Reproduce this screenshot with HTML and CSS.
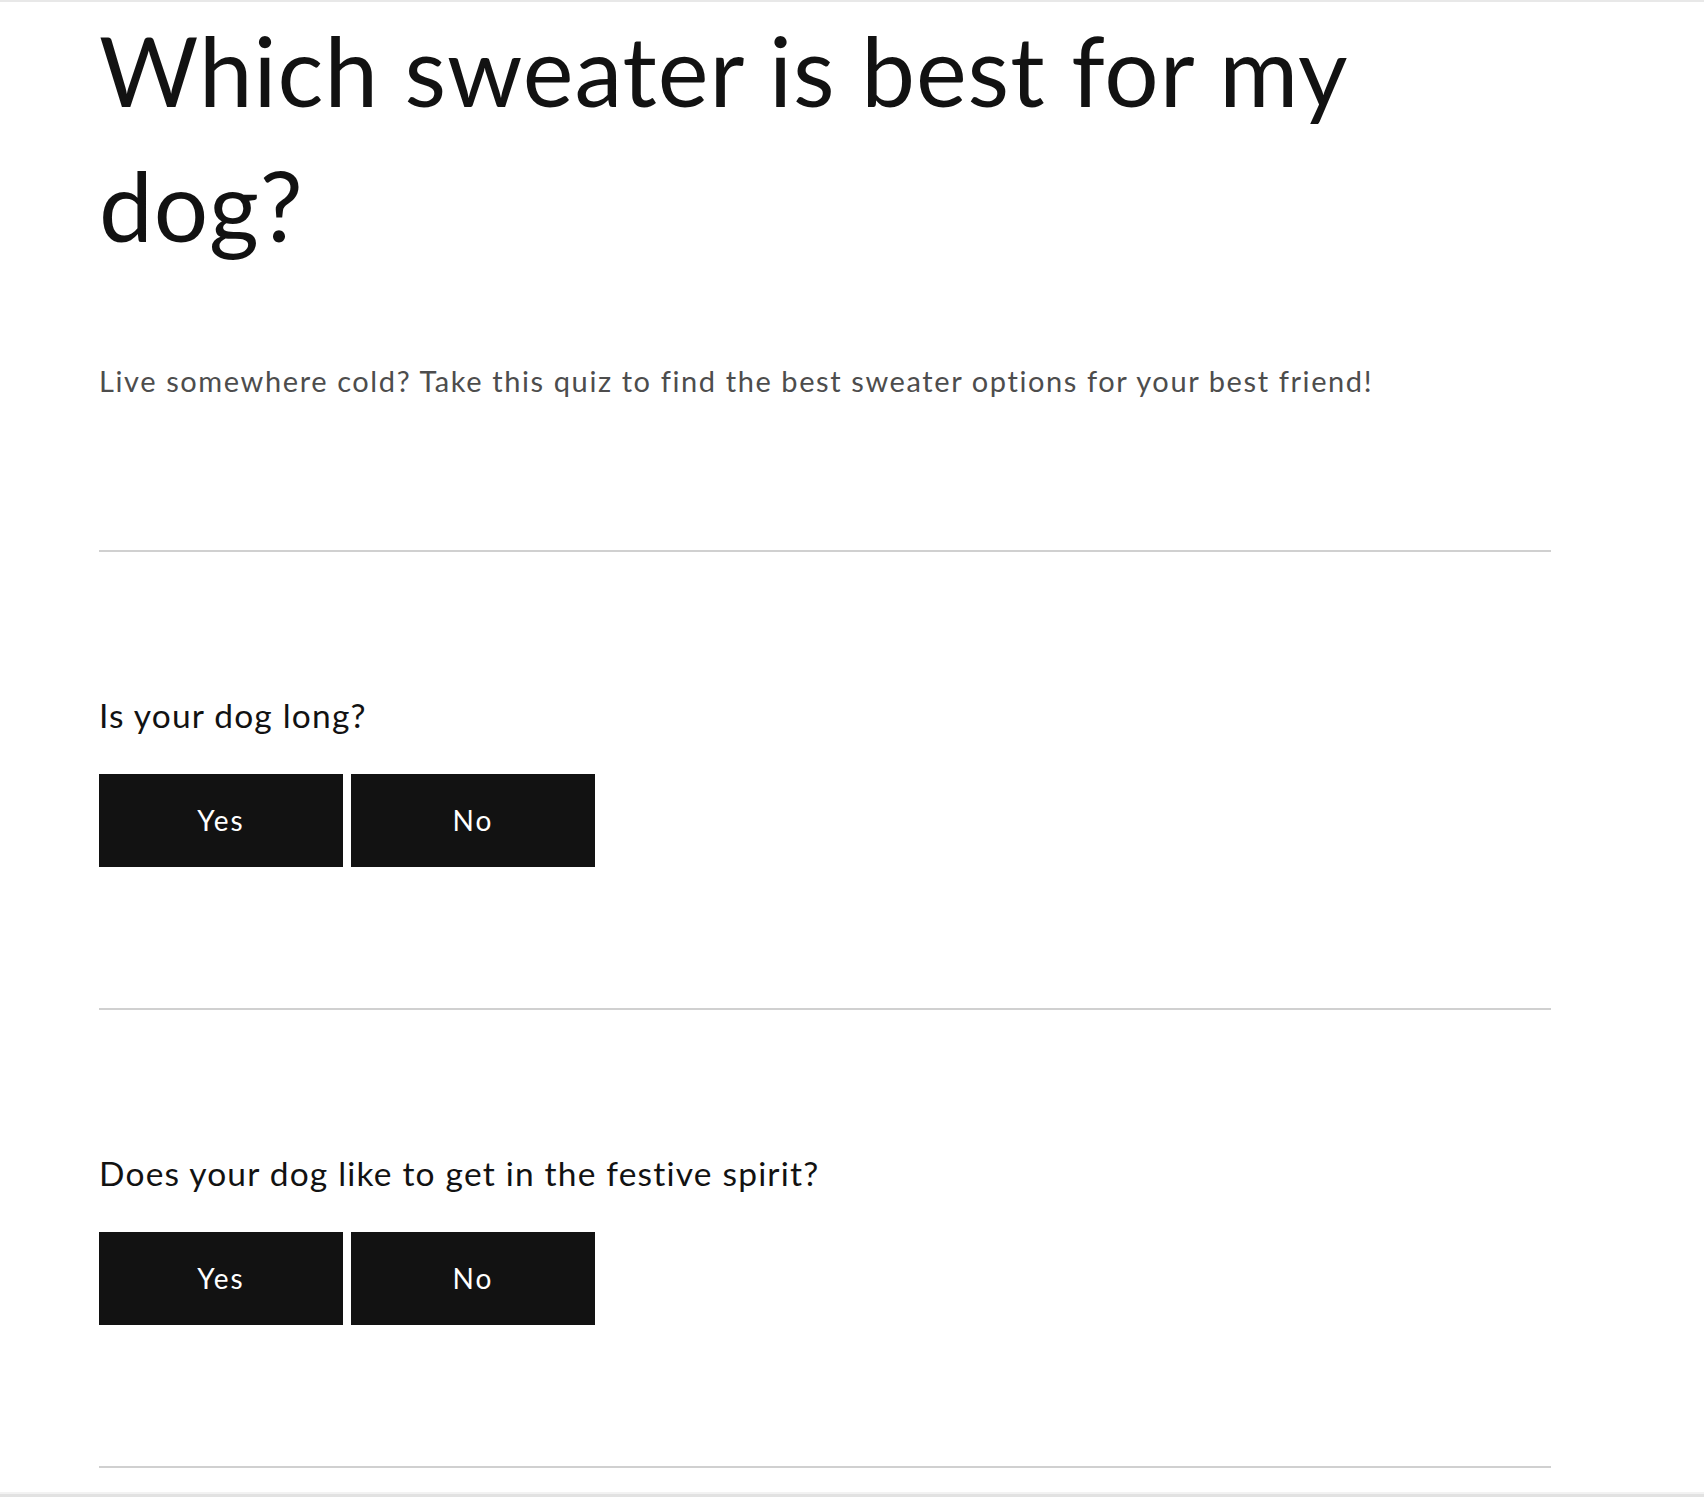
FILE: index.html
```html
<!DOCTYPE html>
<html lang="en">
<head>
<meta charset="utf-8">
<title>Which sweater is best for my dog?</title>
<link rel="stylesheet" href="styles.css">
</head>
<body>
<div class="frame-top"></div>
<main class="page">
  <h1 class="title">Which sweater is best for my dog?</h1>
  <p class="intro">Live somewhere cold? Take this quiz to find the best sweater options for your best friend!</p>
  <div class="quiz">
    <section class="question">
      <h2 class="question-text">Is your dog long?</h2>
      <div class="answers">
        <button class="answer" type="button">Yes</button>
        <button class="answer" type="button">No</button>
      </div>
    </section>
    <section class="question">
      <h2 class="question-text">Does your dog like to get in the festive spirit?</h2>
      <div class="answers">
        <button class="answer" type="button">Yes</button>
        <button class="answer" type="button">No</button>
      </div>
    </section>
  </div>
</main>
<div class="frame-bottom"></div>
</body>
</html>
```
FILE: styles.css
```css
html, body {
  margin: 0;
  padding: 0;
  background: #ffffff;
}

body {
  font-family: Lato, "Open Sans", sans-serif;
  color: #121212;
}

.frame-top {
  height: 2px;
  background: #e8e8e8;
}

.page {
  width: 1452px;
  margin-left: 99px;
}

.title {
  margin: 0;
  font-size: 96px;
  font-weight: 400;
  line-height: 135.4px;
  letter-spacing: 1px;
  color: #121212;
}

.intro {
  margin: 87px 0 0;
  font-size: 29px;
  line-height: 42px;
  letter-spacing: 1.6px;
  color: #4d4d4d;
}

.quiz {
  margin-top: 148px;
  border-bottom: 2px solid #d0d0d0;
}

.question {
  border-top: 2px solid #d0d0d0;
  padding: 142px 0 141px;
}

.question-text {
  margin: 0;
  font-size: 33.5px;
  font-weight: 400;
  line-height: 42px;
  letter-spacing: 1.2px;
  color: #121212;
}

.answers {
  display: flex;
  gap: 8px;
  margin-top: 38px;
}

.answer {
  width: 244px;
  height: 93px;
  border: 0;
  margin: 0;
  padding: 0;
  background: #121212;
  color: #ffffff;
  font-family: Lato, "Open Sans", sans-serif;
  font-size: 28px;
  letter-spacing: 2px;
  display: flex;
  align-items: center;
  justify-content: center;
}

.frame-bottom {
  margin-top: 24px;
  height: 5px;
  background: linear-gradient(#f2f2f2 0 2px, #e2e2e2 2px);
}
```
